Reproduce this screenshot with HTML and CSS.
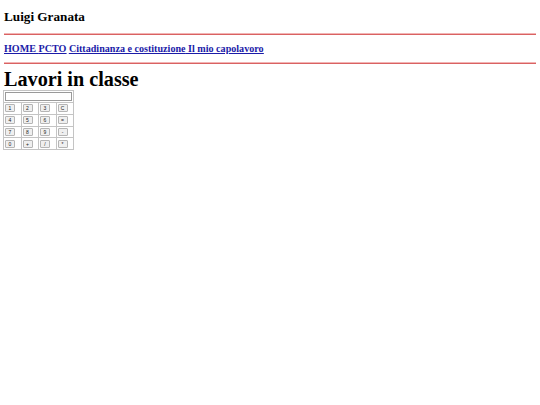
FILE: index.html
```html
<!DOCTYPE html>
<html lang="it">
<head>
<meta charset="utf-8">
<title>Lavori in classe</title>
<link rel="stylesheet" href="styles.css">
</head>
<body>
<h3 class="name">Luigi Granata</h3>
<hr class="rule rule-top">
<nav class="nav">
  <span class="group"><a href="#">HOME</a> <a href="#">PCTO</a></span>
  <span class="group"><a href="#">Cittadinanza e costituzione</a> <a href="#">Il mio capolavoro</a></span>
</nav>
<hr class="rule rule-bottom">
<h1 class="title">Lavori in classe</h1>
<table class="calc">
  <tr><td colspan="4"><input class="display" type="text"></td></tr>
  <tr><td><button class="key">1</button></td><td><button class="key">2</button></td><td><button class="key">3</button></td><td><button class="key">C</button></td></tr>
  <tr><td><button class="key">4</button></td><td><button class="key">5</button></td><td><button class="key">6</button></td><td><button class="key">=</button></td></tr>
  <tr><td><button class="key">7</button></td><td><button class="key">8</button></td><td><button class="key">9</button></td><td><button class="key">-</button></td></tr>
  <tr><td><button class="key">0</button></td><td><button class="key">+</button></td><td><button class="key">/</button></td><td><button class="key">*</button></td></tr>
</table>
</body>
</html>
```
FILE: styles.css
```css
html, body {
  margin: 0;
  padding: 0;
  background: #ffffff;
}
body {
  padding: 0 4px;
  font-family: "Liberation Serif", "Times New Roman", serif;
  color: #000;
}
.name {
  margin: 8.7px 0 0 0;
  font-size: 13.2px;
  line-height: 16px;
  font-weight: bold;
}
.rule {
  height: 0;
  margin: 0;
  border: 0;
  border-top: 1px solid #f2b4b4;
  border-bottom: 1px solid #d96262;
}
.rule-top {
  margin-top: 8.8px;
}
.nav {
  margin-top: 7.4px;
  font-size: 10.1px;
  line-height: 12px;
  font-weight: bold;
}
.group {
  color: #1b1ba8;
  text-decoration: underline;
}
.nav a {
  color: #1b1ba8;
  text-decoration: underline;
}
.rule-bottom {
  margin-top: 7.2px;
}
.title {
  margin: 4px 0 0 0;
  font-size: 20.2px;
  line-height: 22px;
  font-weight: bold;
}
.calc {
  margin: 0.4px 0 0 -1px;
  border-collapse: collapse;
  border: 1px solid #a9a9a9;
}
.calc td {
  border: 1px solid #c4c4c4;
  padding: 0 0 0 1px;
  width: 15.5px;
  height: 10.7px;
  vertical-align: middle;
}
.display {
  display: block;
  box-sizing: border-box;
  width: 67px;
  height: 9px;
  margin: 0;
  padding: 0;
  border: 1px solid #9a9a9a;
  background: #fff;
}
.key {
  display: block;
  box-sizing: border-box;
  width: 10px;
  height: 8px;
  margin: 0;
  padding: 0;
  border: 1px solid #b5b5b5;
  border-radius: 1px;
  background: #efefef;
  font-family: "Liberation Sans", Arial, sans-serif;
  font-size: 5px;
  line-height: 6px;
  color: #222;
  text-align: center;
}
```
